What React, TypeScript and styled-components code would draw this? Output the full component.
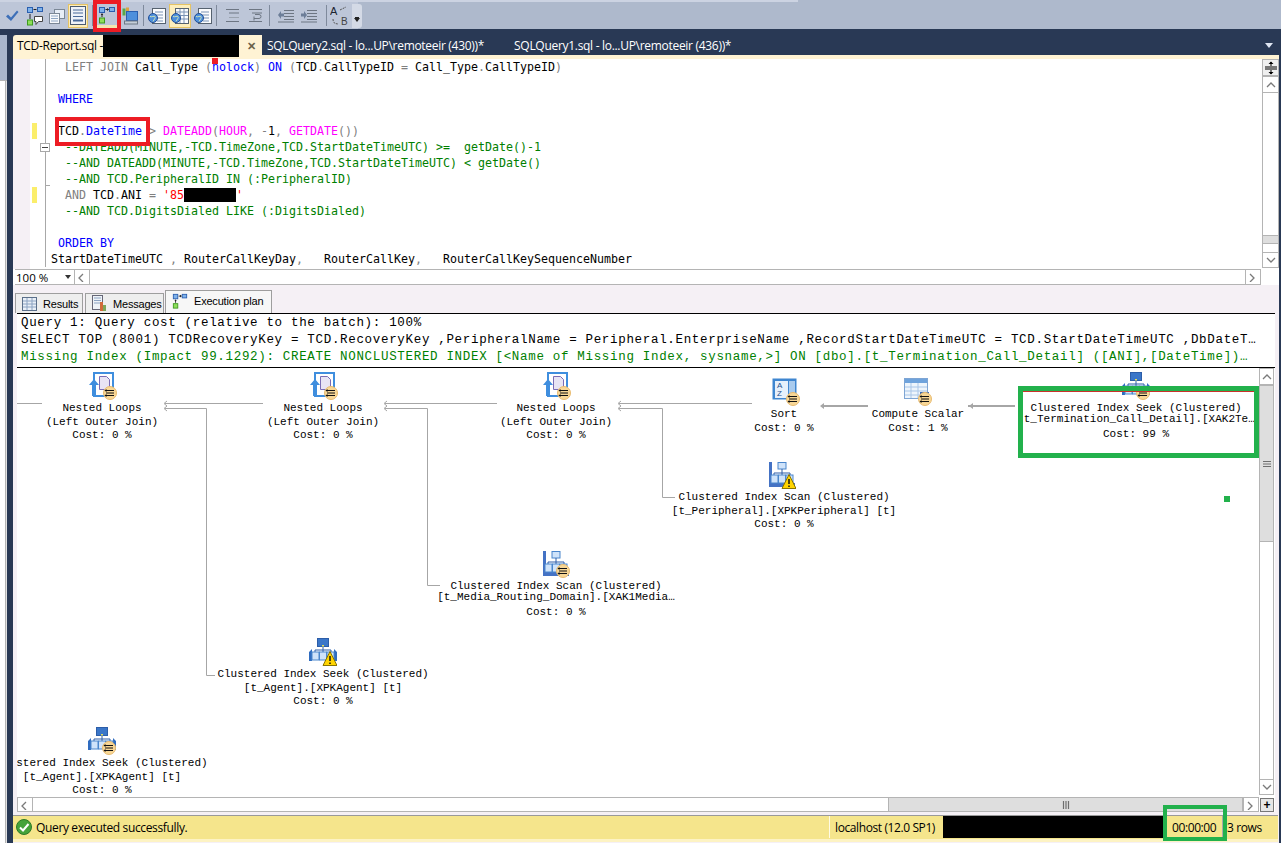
import React from 'react';
import styled, { createGlobalStyle } from 'styled-components';

const NAVY = '#293955';
const PINK = '#f5f0f5';
const EDGE = '#b4b4b4';
const UI_FONT = '"Open Sans", "Noto Sans", sans-serif';

const GlobalStyle = createGlobalStyle`
  html, body {
    margin: 0;
    padding: 0;
    background: ${NAVY};
  }
  * {
    box-sizing: border-box;
  }
`;

/* ---------- small drawings ---------- */

const PlanGlyph = ({ size = 18 }: { size?: number }) => (
  <svg width={size} height={size} viewBox="0 0 18 18">
    <rect x="1.5" y="1.5" width="5" height="5" fill="#7fb2ea" stroke="#2a5fb0" />
    <rect x="11.5" y="1.5" width="5" height="4" fill="#7fb2ea" stroke="#2a5fb0" />
    <rect x="1.5" y="12" width="5" height="5" fill="#8ede5a" stroke="#3c9a1e" />
    <path d="M7.5 3.5h3M4 8v3" stroke="#222" fill="none" />
    <path d="M9 2l2 1.5L9 5zM2.8 9L4 7l1.2 2z" fill="#222" />
  </svg>
);

const PlanBubble = () => (
  <svg width="18" height="20" viewBox="0 0 18 20">
    <rect x="1.5" y="1.5" width="5" height="5" fill="#7fb2ea" stroke="#2a5fb0" />
    <rect x="11.5" y="1.5" width="5" height="4" fill="#7fb2ea" stroke="#2a5fb0" />
    <rect x="1.5" y="14" width="5" height="5" fill="#8ede5a" stroke="#3c9a1e" />
    <path d="M7.5 3.5h3M4 8v5" stroke="#222" fill="none" />
    <path d="M8.5 10.5h8v5h-4l-2.5 3v-3h-1.500z" fill="#fff" stroke="#444" />
  </svg>
);

const CheckGlyph = () => (
  <svg width="14" height="14" viewBox="0 0 14 14">
    <path d="M1 7.500l2-2 3 3 6-7 1.500 1.500L6 12z" fill="#3d6fb8" />
  </svg>
);

const WindowsGlyph = () => (
  <svg width="16" height="16" viewBox="0 0 16 16">
    <rect x="5.500" y="1.500" width="10" height="9" fill="#e8eef7" stroke="#7b8796" />
    <rect x="0.500" y="5.500" width="10" height="10" fill="#f7f9fc" stroke="#7b8796" />
    <path d="M2 8h7M2 10.500h7M2 13h7" stroke="#8fa6c4" />
  </svg>
);

const ListGlyph = () => (
  <svg width="16" height="19" viewBox="0 0 16 19">
    <rect x="0.500" y="0.500" width="15" height="18" fill="#eef2f8" stroke="#4a5a70" />
    <path d="M3 4h10M3 7h10M3 10.500h10" stroke="#4a6a9a" />
    <path d="M3 14.500h10" stroke="#4a6a9a" strokeWidth="2" />
  </svg>
);

const ServerGlyph = () => (
  <svg width="16" height="18" viewBox="0 0 16 18">
    <rect x="0.500" y="1.500" width="3" height="7" fill="#5aa84a" />
    <rect x="4" y="0.500" width="3" height="8" fill="#d9a441" />
    <rect x="4.500" y="4.500" width="11" height="9" fill="#4d8fdc" stroke="#2a5fb0" />
    <rect x="2.500" y="14" width="13" height="3" fill="#c5ced9" stroke="#6d7885" />
  </svg>
);

const DocGlobe = ({ grid }: { grid?: boolean }) => (
  <svg width="18" height="18" viewBox="0 0 18 18">
    <rect x="4.500" y="1.500" width="13" height="15" fill="#fbfcfe" stroke="#56626f" />
    {grid ? (
      <path d="M5 5h12M5 8.500h12M5 12h12M9 2v14M13 2v14" stroke="#7b93b5" />
    ) : (
      <path d="M7 5h8M7 8h8M9 11h6M9 14h6" stroke="#7b93b5" />
    )}
    <circle cx="5" cy="11" r="4.500" fill="#4d8fdc" stroke="#234f96" />
    <path d="M2 9.500c2 1 4-1 5 0s-1 3-2 5" stroke="#cfe5b8" fill="none" />
  </svg>
);

const LinesGlyph = ({ undo }: { undo?: boolean }) => (
  <svg width="15" height="15" viewBox="0 0 15 15">
    <path d="M1 1.500h13M4 5h10M1 13.500h13" stroke="#6d7683" fill="none" />
    {undo ? (
      <path d="M6 10.500h5a2 2 0 0 0 0-4H7M6 8.500v4" stroke="#6d7683" fill="none" />
    ) : (
      <path d="M4 9.500h10" stroke="#9aa3af" fill="none" />
    )}
  </svg>
);

const IndentGlyph = ({ right }: { right?: boolean }) => (
  <svg width="16" height="14" viewBox="0 0 16 14">
    <path d="M6 1.500h10M6 4.500h10M6 7.500h10M6 10.500h10M0 13h16" stroke="#6d7683" fill="none" />
    <path d={right ? 'M0 4.500h3V2l3 4-3 4V7.500H0z' : 'M6 4.500H3V2L0 6l3 4V7.500h3z'} fill="#6d7e98" />
  </svg>
);

const ReplaceGlyph = () => (
  <svg width="20" height="22" viewBox="0 0 20 22">
    <text x="0" y="10" fontFamily="Liberation Sans, sans-serif" fontSize="11" fill="#1c2430">
      A
    </text>
    <text x="11" y="20" fontFamily="Liberation Sans, sans-serif" fontSize="10" fill="#444">
      B
    </text>
    <path d="M10 5l6-3M3 14c0 4 2 5 6 5" stroke="#555" strokeDasharray="2 1" fill="none" />
  </svg>
);

const Chevron = ({ dir }: { dir: 'up' | 'down' | 'left' | 'right' }) => {
  const d = {
    up: 'M2 7l4-4 4 4',
    down: 'M2 3l4 4 4-4',
    left: 'M7 2L3 6l4 4',
    right: 'M3 2l4 4-4 4',
  }[dir];
  return (
    <svg width="12" height="10" viewBox="0 0 12 10" preserveAspectRatio="xMidYMid meet">
      <path d={d} stroke="#7a7a7a" strokeWidth="1.300" fill="none" />
    </svg>
  );
};

const Grip = ({ vertical }: { vertical?: boolean }) => (
  <svg width="8" height="8" viewBox="0 0 8 8">
    {vertical ? (
      <path d="M0 1.500h8M0 4h8M0 6.500h8" stroke="#6e6e6e" strokeWidth="1.200" />
    ) : (
      <path d="M1.500 0v8M4 0v8M6.500 0v8" stroke="#6e6e6e" strokeWidth="1.200" />
    )}
  </svg>
);

const GridTabGlyph = () => (
  <svg width="15" height="14" viewBox="0 0 15 14">
    <rect x="0.500" y="0.500" width="14" height="13" fill="#e9eff7" stroke="#5b6f8a" />
    <path d="M1 4h13M1 7h13M1 10h13M5 1v12M10 1v12" stroke="#8ca3c2" />
  </svg>
);

const MessagesGlyph = () => (
  <svg width="15" height="17" viewBox="0 0 15 17">
    <rect x="0.500" y="0.500" width="10" height="14" fill="#eef2f7" stroke="#667" />
    <path d="M2 3h7M2 5.500h7M2 8h7" stroke="#8ca3c2" />
    <rect x="8" y="7" width="3" height="9" fill="#d06a3a" />
    <rect x="11" y="10" width="3" height="6" fill="#7da65a" />
  </svg>
);

const SuccessGlyph = () => (
  <svg width="16" height="16" viewBox="0 0 16 16">
    <circle cx="8" cy="8" r="7.500" fill="#45a33a" stroke="#2d7a26" />
    <path d="M4 8.500l3 3 5.500-6.500" stroke="#fff" strokeWidth="2" fill="none" />
  </svg>
);

const ParallelBadge = () => (
  <g>
    <circle cx="21" cy="21" r="6.500" fill="#f8d796" stroke="#e8bb70" />
    <path d="M17 18.500h8M17 21h8M17 23.500h8" stroke="#111" />
    <path d="M15.500 18.500l2-1.500v3zM15.500 23.500l2-1.500v3z" fill="#111" />
  </g>
);

const WarnBadge = () => (
  <g>
    <path d="M21 13.500l7 14H14z" fill="#ffd400" stroke="#8a7400" />
    <path d="M21 18v5M21 24.500v1.500" stroke="#111" strokeWidth="1.500" />
  </g>
);

const LoopsArt = () => (
  <g>
    <rect x="5" y="1" width="19" height="23" fill="#fff" stroke="#3f8ede" strokeWidth="2" />
    <path d="M10.500 4.500h7l3 3v10h-10z" fill="#e8e4f4" stroke="#7a6cb5" />
    <path d="M0 13l5-6 5 6H7v11H3V13z" fill="#3f8ede" />
  </g>
);

const TreeBoxes = () => (
  <g>
    <path d="M14 8v4M6 14v-2h16v2M14 12v2" stroke="#2c5da8" fill="none" />
    <rect x="3" y="14" width="7" height="8" fill="#cfe3fa" stroke="#4a86cc" />
    <rect x="10.500" y="14" width="7" height="8" fill="#cfe3fa" stroke="#4a86cc" />
    <rect x="18" y="14" width="7" height="8" fill="#cfe3fa" stroke="#4a86cc" />
  </g>
);

const SeekArt = () => (
  <g>
    <path d="M0 14l3-3v12H0zM28 14l-3-3v12h3z" fill="#2f6cc0" />
    <rect x="8.500" y="0.500" width="11" height="8" fill="#3a76c8" stroke="#2c5da8" />
    <rect x="13" y="7" width="2" height="2" fill="#e8e05a" />
    <TreeBoxes />
  </g>
);

const ScanArt = () => (
  <g>
    <path d="M1 1h3v21h23v4H1z" fill="#4472c4" />
    <rect x="10" y="1.500" width="8" height="6.500" fill="#cfe3fa" stroke="#4a86cc" />
    <TreeBoxes />
  </g>
);

const SortArt = () => (
  <g>
    <rect x="0.500" y="0.500" width="24" height="21" fill="#3f86d0" />
    <rect x="3" y="3" width="13" height="17" fill="#e6f0fb" />
    <rect x="17" y="3" width="6" height="17" fill="#a9cbee" />
    <text x="5" y="10" fontSize="8" fontFamily="Liberation Sans, sans-serif" fill="#24518f">
      A
    </text>
    <text x="5" y="18" fontSize="8" fontFamily="Liberation Sans, sans-serif" fill="#24518f">
      Z
    </text>
  </g>
);

const ComputeArt = () => (
  <g>
    <rect x="0.500" y="0.500" width="23" height="20" fill="#eef5fc" stroke="#7ea5d4" />
    <rect x="1" y="1" width="22" height="4" fill="#6fa3dc" />
    <path d="M1 9h22M1 13h22M1 17h22M7 5v15M14 5v15" stroke="#a9c6e8" />
    <rect x="16" y="14" width="9" height="9" fill="#3f6db5" />
  </g>
);

const OP_ART = {
  loops: LoopsArt,
  seek: SeekArt,
  scan: ScanArt,
  sort: SortArt,
  compute: ComputeArt,
};

const OpIcon = ({ op, badge }: { op: keyof typeof OP_ART; badge: 'parallel' | 'warn' }) => {
  const Art = OP_ART[op];
  return (
    <svg width="28" height="28" viewBox="0 0 28 28">
      <Art />
      {badge === 'warn' ? <WarnBadge /> : <ParallelBadge />}
    </svg>
  );
};

/* ---------- data ---------- */

type Tok = [string, string?];
const K = '#0000ff';
const F = '#ff00ff';
const G = '#808080';
const C = '#008000';
const S = '#ff0000';

const codeLines: { toks: Tok[]; changed?: boolean; fold?: boolean; tick?: boolean; secret?: boolean }[] = [
  {
    toks: [
      ['  LEFT JOIN', G],
      [' Call_Type '],
      ['(', G],
      ['nolock', K],
      [')', G],
      [' '],
      ['ON', K],
      [' '],
      ['(', G],
      ['TCD'],
      ['.', G],
      ['CallTypeID '],
      ['=', G],
      [' Call_Type'],
      ['.', G],
      ['CallTypeID'],
      [')', G],
    ],
  },
  { toks: [] },
  { toks: [[' WHERE', K]] },
  { toks: [] },
  {
    changed: true,
    toks: [
      [' TCD'],
      ['.', G],
      ['DateTime', K],
      [' > ', G],
      ['DATEADD', F],
      ['(', G],
      ['HOUR', F],
      [',', G],
      [' '],
      ['-', G],
      ['1', '#000000'],
      [', ', G],
      ['GETDATE', F],
      ['())', G],
    ],
  },
  {
    fold: true,
    toks: [['  --DATEADD(MINUTE,-TCD.TimeZone,TCD.StartDateTimeUTC) >=  getDate()-1', C]],
  },
  { toks: [['  --AND DATEADD(MINUTE,-TCD.TimeZone,TCD.StartDateTimeUTC) < getDate()', C]] },
  { tick: true, toks: [['  --AND TCD.PeripheralID IN (:PeripheralID)', C]] },
  {
    changed: true,
    secret: true,
    toks: [['  AND', G], [' TCD'], ['.', G], ['ANI '], ['=', G], [' '], ["'85", S]],
  },
  { toks: [['  --AND TCD.DigitsDialed LIKE (:DigitsDialed)', C]] },
  { toks: [] },
  { toks: [[' ORDER BY', K]] },
  {
    toks: [
      ['StartDateTimeUTC '],
      [',', G],
      [' RouterCallKeyDay'],
      [',', G],
      ['   RouterCallKey'],
      [',', G],
      ['   RouterCallKeySequenceNumber'],
    ],
  },
];

type PlanNode = {
  cx: number;
  top: number;
  op: keyof typeof OP_ART;
  badge: 'parallel' | 'warn';
  lines: string[];
  shift?: number;
  tight?: boolean;
};

const LOOP_LINES = ['Nested Loops', '(Left Outer Join)', 'Cost: 0 %'];

const planNodes: PlanNode[] = [
  { cx: 102, top: 372, op: 'loops', badge: 'parallel', lines: LOOP_LINES, shift: 1 },
  { cx: 323, top: 372, op: 'loops', badge: 'parallel', lines: LOOP_LINES, shift: 1 },
  { cx: 556, top: 372, op: 'loops', badge: 'parallel', lines: LOOP_LINES, shift: 1 },
  { cx: 784, top: 378, op: 'sort', badge: 'parallel', lines: ['Sort', 'Cost: 0 %'], shift: 2 },
  { cx: 918, top: 378, op: 'compute', badge: 'parallel', lines: ['Compute Scalar', 'Cost: 1 %'] },
  {
    cx: 1136,
    top: 372,
    op: 'seek',
    badge: 'parallel',
    tight: true,
    lines: ['Clustered Index Seek (Clustered)', '[t_Termination_Call_Detail].[XAK2Te…', 'Cost: 99 %'],
  },
  {
    cx: 784,
    top: 461,
    op: 'scan',
    badge: 'warn',
    shift: -2,
    lines: ['Clustered Index Scan (Clustered)', '[t_Peripheral].[XPKPeripheral] [t]', 'Cost: 0 %'],
  },
  {
    cx: 556,
    top: 550,
    op: 'scan',
    badge: 'parallel',
    tight: true,
    lines: ['Clustered Index Scan (Clustered)', '[t_Media_Routing_Domain].[XAK1Media…', 'Cost: 0 %'],
  },
  {
    cx: 323,
    top: 638,
    op: 'seek',
    badge: 'warn',
    lines: ['Clustered Index Seek (Clustered)', '[t_Agent].[XPKAgent] [t]', 'Cost: 0 %'],
  },
  {
    cx: 102,
    top: 727,
    op: 'seek',
    badge: 'parallel',
    lines: ['Clustered Index Seek (Clustered)', '[t_Agent].[XPKAgent] [t]', 'Cost: 0 %'],
  },
];

const thinEdges = [
  'M17 403.500H42',
  'M165 403.500H263',
  'M165 408.500H206.500V675.500H215',
  'M385 403.500H497',
  'M385 408.500H427.500V585.500H440',
  'M619 403.500H752',
  'M619 408.500H662.500V497.500H675',
];
const arrowHeads = ['M167 401l-3 2.500 3 2.500', 'M167 406l-3 2.500 3 2.500', 'M387 401l-3 2.500 3 2.500', 'M387 406l-3 2.500 3 2.500', 'M621 401l-3 2.500 3 2.500', 'M621 406l-3 2.500 3 2.500'];

/* ---------- page ---------- */

const App = () => (
  <Page>
    <GlobalStyle />
    <TopStrip />
    <Toolbar>
      <ToolBtn>
        <CheckGlyph />
      </ToolBtn>
      <ToolBtn>
        <PlanBubble />
      </ToolBtn>
      <ToolBtn $w={20}>
        <WindowsGlyph />
      </ToolBtn>
      <ToolBtn $w={20} $active>
        <ListGlyph />
      </ToolBtn>
      <ToolSep $ml={3} $mr={2} />
      <ToolBtn $active $flat>
        <PlanGlyph />
      </ToolBtn>
      <ToolBtn>
        <ServerGlyph />
      </ToolBtn>
      <ToolSep />
      <ToolBtn>
        <DocGlobe />
      </ToolBtn>
      <ToolBtn $active>
        <DocGlobe grid />
      </ToolBtn>
      <ToolBtn>
        <DocGlobe />
      </ToolBtn>
      <ToolSep $mr={3} />
      <ToolBtn>
        <LinesGlyph />
      </ToolBtn>
      <ToolBtn>
        <LinesGlyph undo />
      </ToolBtn>
      <ToolSep $mr={4} $ml={2} />
      <ToolBtn>
        <IndentGlyph />
      </ToolBtn>
      <ToolBtn>
        <IndentGlyph right />
      </ToolBtn>
      <ToolSep $ml={5} />
      <ToolBtn>
        <ReplaceGlyph />
      </ToolBtn>
      <Overflow />
    </Toolbar>

    <Body>
      <SidePanel>
        <SideHeader />
        <SideList />
      </SidePanel>

      <Workspace>
        <TabStrip>
          <ActiveTab>
            <TabTitle>TCD-Report.sql -</TabTitle>
            <TabSecret />
            <TabClose>✕</TabClose>
          </ActiveTab>
          <DocTab>SQLQuery2.sql - lo...UP\remoteeir (430))*</DocTab>
          <DocTab>SQLQuery1.sql - lo...UP\remoteeir (436))*</DocTab>
          <TabMenu />
        </TabStrip>

        <Document>
          <CreamLine />
          <EditorMain>
            <CodeArea>
              {codeLines.map((line, i) => (
                <CodeRow key={i}>
                  <LineMargin $changed={line.changed}>
                    {line.fold && <FoldBox />}
                    {line.tick && <FoldTick />}
                  </LineMargin>
                  <CodeText>
                    {line.toks.map(([text, color], j) => (
                      <Tok key={j} $color={color}>
                        {text}
                      </Tok>
                    ))}
                    {line.secret && (
                      <>
                        <CodeSecret />
                        <Tok $color={S}>'</Tok>
                      </>
                    )}
                  </CodeText>
                </CodeRow>
              ))}
            </CodeArea>
            <EditorScroll>
              <SplitBtn>
                <svg width="14" height="14" viewBox="0 0 14 14">
                  <path d="M1 6h12M1 8h12M7 1v4M7 9v4" stroke="#000" />
                  <path d="M4.500 3L7 0.500 9.500 3zM4.500 11L7 13.500 9.500 11z" fill="#000" />
                </svg>
              </SplitBtn>
              <ScrollBtn $h={17}>
                <Chevron dir="up" />
              </ScrollBtn>
              <Track />
              <SmallThumb />
              <Track $fixed={8} />
              <ScrollBtn $h={16}>
                <Chevron dir="down" />
              </ScrollBtn>
            </EditorScroll>
          </EditorMain>

          <EditorFooter>
            <ZoomBox>
              100 %
              <ZoomCaret />
            </ZoomBox>
            <HScroll>
              <ScrollBtn $w={16}>
                <Chevron dir="left" />
              </ScrollBtn>
              <Track />
              <ScrollBtn $w={16}>
                <Chevron dir="right" />
              </ScrollBtn>
            </HScroll>
          </EditorFooter>

          <ResultTabs>
            <ResultTab $w={68}>
              <GridTabGlyph />
              Results
            </ResultTab>
            <ResultTab $w={79}>
              <MessagesGlyph />
              Messages
            </ResultTab>
            <ResultTab $w={107} $active>
              <PlanGlyph size={16} />
              Execution plan
            </ResultTab>
          </ResultTabs>

          <ResultPanel>
            <PlanHeader>
              <PlanLine>Query 1: Query cost (relative to the batch): 100%</PlanLine>
              <PlanLine>
                SELECT TOP (8001) TCDRecoveryKey = TCD.RecoveryKey ,PeripheralName = Peripheral.EnterpriseName
                ,RecordStartDateTimeUTC = TCD.StartDateTimeUTC ,DbDateT…
              </PlanLine>
              <PlanLine $green>
                Missing Index (Impact 99.1292): CREATE NONCLUSTERED INDEX [&lt;Name of Missing Index, sysname,&gt;] ON
                [dbo].[t_Termination_Call_Detail] ([ANI],[DateTime])…
              </PlanLine>
            </PlanHeader>
            <PlanBody>
              <Canvas>
                <Edges viewBox="17 368 1242 429" width="1242" height="429">
                  {thinEdges.map((d) => (
                    <path key={d} d={d} stroke="#a6a6a6" fill="none" />
                  ))}
                  {arrowHeads.map((d) => (
                    <path key={d} d={d} stroke="#a6a6a6" fill="none" />
                  ))}
                  <path d="M822 406H868M968 406H1015" stroke="#a6a6a6" strokeWidth="2" fill="none" />
                  <path d="M824 403l-4 3 4 3zM973 403l-4 3 4 3z" fill="#a6a6a6" />
                </Edges>
                {planNodes.map((n) => (
                  <Node key={`${n.cx}-${n.top}`} $cx={n.cx - 17} $top={n.top - 368}>
                    <NodeIcon $shift={n.shift ?? 0}>
                      <OpIcon op={n.op} badge={n.badge} />
                    </NodeIcon>
                    {n.lines.map((text, i) => (
                      <NodeLine key={i} $tight={n.tight}>
                        {text}
                      </NodeLine>
                    ))}
                  </Node>
                ))}
              </Canvas>
              <PlanVScroll>
                <ScrollBtn $h={17}>
                  <Chevron dir="up" />
                </ScrollBtn>
                <PlanVThumb>
                  <Grip vertical />
                </PlanVThumb>
                <Track />
                <ScrollBtn $h={16}>
                  <Chevron dir="down" />
                </ScrollBtn>
              </PlanVScroll>
            </PlanBody>
            <PlanFooter>
              <PlanHScroll>
                <ScrollBtn $w={16}>
                  <Chevron dir="left" />
                </ScrollBtn>
                <Track />
                <PlanHThumb>
                  <Grip />
                </PlanHThumb>
                <ScrollBtn $w={16}>
                  <Chevron dir="right" />
                </ScrollBtn>
              </PlanHScroll>
              <PlusBtn>+</PlusBtn>
            </PlanFooter>
          </ResultPanel>

          <StatusBar>
            <StatusMessage>
              <SuccessGlyph />
              Query executed successfully.
            </StatusMessage>
            <StatusCell $w={114} $light>
              localhost (12.0 SP1)
            </StatusCell>
            <StatusSecret />
            <StatusCell $w={58} $pad={8}>
              00:00:00
            </StatusCell>
            <StatusCell $w={56} $pad={4} $grey>
              3 rows
            </StatusCell>
          </StatusBar>
        </Document>
      </Workspace>
    </Body>

    <Mark $x={93} $y={0} $w={28} $h={32} $t={4} $c="#ed1c24" />
    <Mark $x={55} $y={117} $w={95} $h={29} $t={4} $c="#ed1c24" />
    <Mark $x={212} $y={58} $w={6} $h={5} $t={3} $c="#ed1c24" />
    <Mark $x={1018} $y={386} $w={241} $h={72} $t={5} $c="#22b14c">
      <MarkRule />
    </Mark>
    <Mark $x={1224} $y={496} $w={6} $h={6} $t={3} $c="#22b14c" />
    <Mark $x={1163} $y={805} $w={64} $h={36} $t={4} $c="#22b14c" />
  </Page>
);

export default App;

const Page = styled.div`
  position: relative;
  width: 1281px;
  height: 843px;
  overflow: hidden;
  display: flex;
  flex-direction: column;
  background: ${NAVY};
  font-family: ${UI_FONT};
  font-size: 12px;
  color: #000;
`;

const TopStrip = styled.div`
  height: 2px;
  background: linear-gradient(90deg, #ccd3e2 0, #ccd3e2 798px, #aeb9cc 798px);
`;

const Toolbar = styled.div`
  height: 27px;
  flex: none;
  display: flex;
  align-items: center;
  gap: 1px;
  padding: 0 0 0 1px;
  background: linear-gradient(90deg, #bdc6d8 0, #bdc6d8 358px, #aeb9cc 358px);
`;

const ToolBtn = styled.div<{ $w?: number; $active?: boolean; $flat?: boolean }>`
  width: ${({ $w }) => $w ?? 22}px;
  height: 24px;
  flex: none;
  display: flex;
  align-items: center;
  justify-content: center;
  background: ${({ $active, $flat }) => ($active && !$flat ? '#fdeebc' : 'transparent')};
  border: 1px solid ${({ $active, $flat }) => ($active && !$flat ? '#e5c365' : 'transparent')};
  ${({ $flat }) => $flat && 'border-bottom: 3px solid #f3e6b0;'}
`;

const ToolSep = styled.div<{ $ml?: number; $mr?: number }>`
  width: 1px;
  height: 21px;
  flex: none;
  margin: 0 ${({ $mr }) => $mr ?? 1}px 0 ${({ $ml }) => $ml ?? 1}px;
  background: #7f8a9c;
`;

const Overflow = styled.div`
  width: 10px;
  height: 24px;
  position: relative;
  background: #d4dae6;
  border-radius: 0 3px 3px 0;
  &::after {
    content: '';
    position: absolute;
    left: 2px;
    bottom: 6px;
    border: 3px solid transparent;
    border-top: 4px solid #222;
    border-bottom: 0;
    box-shadow: 0 -2px 0 -1px #222;
  }
`;

const Body = styled.div`
  flex: 1;
  min-height: 0;
  display: flex;
`;

const SidePanel = styled.div`
  width: 7px;
  flex: none;
  margin-top: 6px;
  display: flex;
  flex-direction: column;
`;

const SideHeader = styled.div`
  height: 45px;
  background: #a9b6cc;
`;

const SideList = styled.div`
  flex: 1;
  background: #e2e2e2;
  border-top: 1px solid ${EDGE};
  position: relative;
  &::before {
    content: '';
    display: block;
    width: 5px;
    height: 100%;
    background: #fff;
    border-right: 1px solid ${EDGE};
  }
`;

const Workspace = styled.div`
  flex: 1;
  min-width: 0;
  display: flex;
  flex-direction: column;
  padding: 0 2px 0 6px;
`;

const TabStrip = styled.div`
  height: 26px;
  flex: none;
  display: flex;
  align-items: flex-end;
  position: relative;
`;

const ActiveTab = styled.div`
  width: 249px;
  height: 20px;
  flex: none;
  display: flex;
  align-items: center;
  padding-left: 4px;
  background: #fff3d4;
  border-radius: 3px 0 0 0;
  letter-spacing: -0.3px;
`;

const TabTitle = styled.span`
  width: 86px;
  flex: none;
  white-space: nowrap;
`;

const TabSecret = styled.div`
  width: 136px;
  height: 22px;
  flex: none;
  margin-bottom: -2px;
  align-self: flex-start;
  background: #000;
  position: relative;
  z-index: 2;
`;

const TabClose = styled.span`
  margin-left: 8px;
  font-size: 11px;
  color: #6b6248;
  font-weight: 700;
`;

const DocTab = styled.div`
  height: 20px;
  flex: none;
  margin-left: 5px;
  margin-right: 25px;
  display: flex;
  align-items: center;
  color: #fff;
  white-space: nowrap;
  letter-spacing: -0.3px;
`;

const TabMenu = styled.div`
  margin-left: auto;
  margin-right: 6px;
  align-self: center;
  margin-top: 6px;
  border: 4px solid transparent;
  border-top: 5px solid #dfe6f2;
  border-bottom: 0;
`;

const Document = styled.div`
  flex: 1;
  min-height: 0;
  display: flex;
  flex-direction: column;
  background: ${PINK};
`;

const CreamLine = styled.div`
  height: 4px;
  flex: none;
  background: #fff3d4;
`;

const EditorMain = styled.div`
  height: 210px;
  flex: none;
  display: flex;
  background: #fff;
`;

const CodeArea = styled.div`
  flex: 1;
  min-width: 0;
  border-left: 17px solid ${PINK};
  overflow: hidden;
`;

const CodeRow = styled.div`
  display: flex;
  height: 16px;
`;

const LineMargin = styled.div<{ $changed?: boolean }>`
  width: 21px;
  flex: none;
  position: relative;
  background:
    linear-gradient(#a8a8a8, #a8a8a8) 15px 0 / 1px 100% no-repeat
    ${({ $changed }) => ($changed ? ', linear-gradient(#fbee6b, #fbee6b) 2px 0 / 5px 100% no-repeat' : '')};
`;

const FoldBox = styled.div`
  position: absolute;
  left: 10px;
  top: 4px;
  width: 10px;
  height: 9px;
  background: #fff;
  border: 1px solid #a8a8a8;
  &::after {
    content: '';
    position: absolute;
    left: 1px;
    right: 1px;
    top: 3px;
    height: 1px;
    background: #444;
  }
`;

const FoldTick = styled.div`
  position: absolute;
  left: 15px;
  bottom: 1px;
  width: 5px;
  height: 1px;
  background: #a8a8a8;
`;

const CodeText = styled.div`
  font-family: "DejaVu Sans Mono", "Liberation Mono", monospace;
  font-size: 11.63px;
  line-height: 16px;
  white-space: pre;
  color: #000;
`;

const Tok = styled.span<{ $color?: string }>`
  color: ${({ $color }) => $color ?? '#000'};
`;

const CodeSecret = styled.span`
  display: inline-block;
  width: 52px;
  height: 14px;
  vertical-align: -3px;
  background: #000;
`;

const EditorScroll = styled.div`
  width: 17px;
  flex: none;
  display: flex;
  flex-direction: column;
  padding-bottom: 1px;
  background: #fff;
`;

const SplitBtn = styled.div`
  height: 17px;
  flex: none;
  display: flex;
  align-items: center;
  justify-content: center;
  background: #f0f0f0;
  border: 1px solid ${EDGE};
`;

const ScrollBtn = styled.div<{ $w?: number; $h?: number }>`
  flex: none;
  display: flex;
  align-items: center;
  justify-content: center;
  ${({ $w }) => $w && `width: ${$w}px;`}
  ${({ $h }) => $h && `height: ${$h}px;`}
  background: #fff;
  border: 1px solid ${EDGE};
`;

const Track = styled.div<{ $fixed?: number }>`
  ${({ $fixed }) => ($fixed ? `height: ${$fixed}px; flex: none;` : 'flex: 1;')}
  background: #fff;
  border-left: 1px solid ${EDGE};
  border-right: 1px solid ${EDGE};
`;

const SmallThumb = styled.div`
  height: 9px;
  flex: none;
  background: #dedede;
  border: 1px solid ${EDGE};
`;

const EditorFooter = styled.div`
  height: 16px;
  flex: none;
  display: flex;
  padding-left: 2px;
  background: #fff;
`;

const ZoomBox = styled.div`
  width: 59px;
  flex: none;
  display: flex;
  align-items: center;
  justify-content: space-between;
  padding: 0 3px 0 1px;
  font-size: 11.5px;
  background: #fff;
  border-top: 1px solid ${EDGE};
  border-bottom: 1px solid ${EDGE};
`;

const ZoomCaret = styled.span`
  border: 3px solid transparent;
  border-top: 4px solid #333;
  border-bottom: 0;
`;

const HScroll = styled.div`
  flex: none;
  width: 1187px;
  display: flex;
  & > div:nth-child(2) {
    border: 0;
    border-top: 1px solid ${EDGE};
    border-bottom: 1px solid ${EDGE};
  }
`;

const ResultTabs = styled.div`
  height: 28px;
  flex: none;
  display: flex;
  align-items: flex-end;
  gap: 2px;
  padding-left: 2px;
`;

const ResultTab = styled.div<{ $w: number; $active?: boolean }>`
  width: ${({ $w }) => $w}px;
  height: ${({ $active }) => ($active ? 23 : 20)}px;
  flex: none;
  display: flex;
  align-items: center;
  gap: 6px;
  padding: 0 0 ${({ $active }) => ($active ? 3 : 0)}px 6px;
  margin-left: ${({ $active }) => ($active ? -1 : 0)}px;
  background: ${({ $active }) => ($active ? '#f7f7f7' : '#eeeeee')};
  border: 1px solid #9e9e9e;
  border-bottom: 0;
  font-family: "Liberation Sans", sans-serif;
  font-size: 11px;
  letter-spacing: -0.2px;
  white-space: nowrap;
`;

const ResultPanel = styled.div`
  flex: none;
  height: 499px;
  display: flex;
  flex-direction: column;
  padding: 0 4px;
`;

const PlanHeader = styled.div`
  height: 55px;
  flex: none;
  padding-top: 1px;
  background: #fff;
  border-top: 1px solid #000;
  border-bottom: 1px solid #000;
  overflow: hidden;
`;

const PlanLine = styled.div<{ $green?: boolean }>`
  padding-left: 4px;
  height: 17px;
  font-family: "Liberation Mono", monospace;
  font-size: 12.500px;
  letter-spacing: 0.680px;
  line-height: 17px;
  white-space: nowrap;
  color: ${({ $green }) => ($green ? '#008000' : '#000')};
`;

const PlanBody = styled.div`
  flex: 1;
  min-height: 0;
  display: flex;
  background: #fff;
`;

const Canvas = styled.div`
  width: 1242px;
  flex: none;
  position: relative;
  overflow: hidden;
`;

const Edges = styled.svg`
  position: absolute;
  left: 0;
  top: 0;
`;

const Node = styled.div<{ $cx: number; $top: number }>`
  position: absolute;
  left: ${({ $cx }) => $cx - 150}px;
  top: ${({ $top }) => $top}px;
  width: 300px;
  display: flex;
  flex-direction: column;
  align-items: center;
`;

const NodeIcon = styled.div<{ $shift: number }>`
  width: 28px;
  height: 28px;
  margin: 0 0 2px ${({ $shift }) => $shift * 2}px;
`;

const NodeLine = styled.div<{ $tight?: boolean }>`
  height: 13.500px;
  font-family: "Liberation Mono", monospace;
  font-size: 11px;
  line-height: 13.500px;
  white-space: nowrap;
  background: #fff;
  ${({ $tight }) =>
    $tight &&
    `
    &:nth-child(3) { margin-top: -2.500px; }
    &:nth-child(4) { margin-top: 1.500px; }
  `}
`;

const PlanVScroll = styled.div`
  width: 15px;
  flex: none;
  display: flex;
  flex-direction: column;
  padding-bottom: 2px;
`;

const PlanVThumb = styled.div`
  height: 157px;
  flex: none;
  display: flex;
  align-items: center;
  justify-content: center;
  background: #dedede;
  border: 1px solid ${EDGE};
`;

const PlanFooter = styled.div`
  height: 15px;
  flex: none;
  display: flex;
  background: #fff;
`;

const PlanHScroll = styled.div`
  width: 1242px;
  flex: none;
  display: flex;
  & > div:nth-child(2) {
    border: 0;
    border-top: 1px solid ${EDGE};
    border-bottom: 1px solid ${EDGE};
  }
`;

const PlanHThumb = styled.div`
  width: 355px;
  flex: none;
  display: flex;
  align-items: center;
  justify-content: center;
  background: #dedede;
  border: 1px solid ${EDGE};
`;

const PlusBtn = styled.div`
  width: 14px;
  height: 14px;
  margin-left: 1px;
  margin-top: 1px;
  display: flex;
  align-items: center;
  justify-content: center;
  font-family: "Liberation Sans", sans-serif;
  font-size: 12px;
  font-weight: 700;
  line-height: 1;
  background: #e6e6e6;
  border: 1px solid #777;
`;

const StatusBar = styled.div`
  height: 27px;
  flex: none;
  margin: 3px 1px 0 0;
  display: flex;
  align-items: stretch;
  padding: 0 0 4px 3px;
  background: linear-gradient(#f5e58c 0, #f5e58c 23px, #fdf3c4 23px);
  border-top: 1px solid #999;
  white-space: nowrap;
`;

const StatusMessage = styled.div`
  flex: 1;
  display: flex;
  align-items: center;
  gap: 4px;
  letter-spacing: -0.35px;
`;

const StatusCell = styled.div<{ $w: number; $pad?: number; $light?: boolean; $grey?: boolean }>`
  width: ${({ $w }) => $w}px;
  flex: none;
  display: flex;
  align-items: center;
  padding-left: ${({ $pad }) => $pad ?? 5}px;
  letter-spacing: -0.4px;
  ${({ $light }) => $light && 'border-left: 1px solid #fffbe5;'}
  ${({ $grey }) => $grey && 'border-left: 1px solid #a9a9a9;'}
`;

const StatusSecret = styled.div`
  width: 221px;
  flex: none;
  background: #000;
`;

const Mark = styled.div<{ $x: number; $y: number; $w: number; $h: number; $t: number; $c: string }>`
  position: absolute;
  left: ${({ $x }) => $x}px;
  top: ${({ $y }) => $y}px;
  width: ${({ $w }) => $w}px;
  height: ${({ $h }) => $h}px;
  border: ${({ $t }) => $t}px solid ${({ $c }) => $c};
`;

const MarkRule = styled.div`
  height: 1px;
  background: #c8322a;
`;
